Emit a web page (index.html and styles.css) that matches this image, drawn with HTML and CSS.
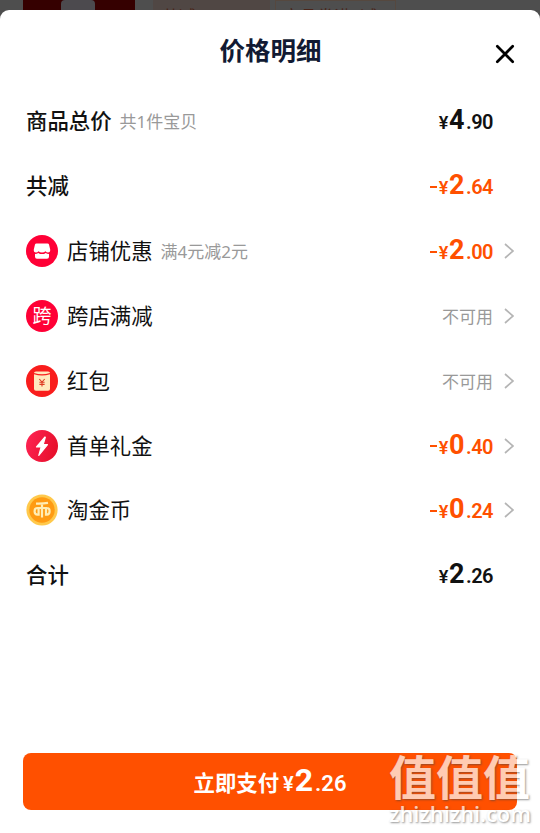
FILE: index.html
```html
<!DOCTYPE html>
<html lang="zh-CN">
<head>
    <meta charset="UTF-8">
    <meta name="viewport" content="width=device-width, initial-scale=1.0">
    <title>价格明细</title>
    <link rel="stylesheet" href="styles.css">
</head>
<body>
    <!-- Dimmed page behind the sheet -->
    <div class="backdrop">
        <div class="backdrop-image"><div class="backdrop-shape"></div></div>
        <div class="backdrop-tag">共减 ¥2.64</div>
        <div class="backdrop-tag outlined">商品券满4减2</div>
    </div>

    <div class="sheet">
        <div class="sheet-header">
            <h1>价格明细</h1>
            <svg class="close" viewBox="0 0 20 20"><path d="M2.3 2.3L17.7 17.7M17.7 2.3L2.3 17.7"/></svg>
        </div>

        <div class="price-list">
            <div class="row total">
                <span class="label">商品总价</span>
                <span class="note">共1件宝贝</span>
                <span class="price"><i>¥</i><b>4</b>.90</span>
            </div>
            <div class="row total">
                <span class="label">共减</span>
                <span class="price minus"><em></em><i>¥</i><b>2</b>.64</span>
            </div>
            <div class="row">
                <svg class="icon" viewBox="0 0 32 32">
                    <circle cx="16" cy="16" r="16" fill="#ff0036"/>
                    <path d="M10.5 8.5h11q1.2 0 1.5 1l1.2 5q.3 3-2.2 3-1.5 0-2.5-1.2-1.3 1.3-3.5 1.3t-3.5-1.3q-1 1.2-2.5 1.2-2.5 0-2.2-3l1.2-5q.3-1 1.5-1z" fill="#fff"/>
                    <path d="M9 19q2 0 3.3-1.1 1.5 1.2 3.7 1.2t3.7-1.2Q21 19 23 19v2.7q0 2-2 2H11q-2 0-2-2z" fill="#fff"/>
                </svg>
                <span class="label">店铺优惠</span>
                <span class="note">满4元减2元</span>
                <span class="price minus"><em></em><i>¥</i><b>2</b>.00</span>
                <svg class="arrow" viewBox="0 0 10 16"><path d="M1 1L9 8L1 15"/></svg>
            </div>
            <div class="row">
                <span class="icon icon-cross">跨</span>
                <span class="label">跨店满减</span>
                <span class="disabled">不可用</span>
                <svg class="arrow" viewBox="0 0 10 16"><path d="M1 1L9 8L1 15"/></svg>
            </div>
            <div class="row">
                <svg class="icon" viewBox="0 0 32 32">
                    <circle cx="16" cy="16" r="16" fill="#f91d1c"/>
                    <path d="M8 8Q8 6.5 10 6.5H22Q24 6.5 24 8Q16 10.4 8 8Z" fill="#ffe9bd"/>
                    <path d="M8 9.2Q16 11.8 24 9.2V24Q24 25.8 22 25.8H10Q8 25.8 8 24Z" fill="#ffe9bd"/>
                    <path d="M13.3 14L16 17L18.7 14M16 17V21.5M13.4 17.2H18.6M13.4 19.4H18.6" fill="none" stroke="#dd3b22" stroke-width="1.1"/>
                </svg>
                <span class="label">红包</span>
                <span class="disabled">不可用</span>
                <svg class="arrow" viewBox="0 0 10 16"><path d="M1 1L9 8L1 15"/></svg>
            </div>
            <div class="row">
                <svg class="icon" viewBox="0 0 32 32">
                    <defs>
                        <linearGradient id="gift" x1="0" y1="0" x2="1" y2="0.3">
                            <stop offset="0" stop-color="#ff2455"/>
                            <stop offset="1" stop-color="#e8112d"/>
                        </linearGradient>
                    </defs>
                    <circle cx="16" cy="16" r="16" fill="url(#gift)"/>
                    <path d="M19 7L10.5 17H15.2L12.8 25.5L21.5 14.6H17.2L19.3 7.4Z" fill="#fff" stroke="#fff" stroke-width="1.2" stroke-linejoin="round"/>
                </svg>
                <span class="label">首单礼金</span>
                <span class="price minus"><em></em><i>¥</i><b>0</b>.40</span>
                <svg class="arrow" viewBox="0 0 10 16"><path d="M1 1L9 8L1 15"/></svg>
            </div>
            <div class="row">
                <svg class="icon" viewBox="0 0 32 32">
                    <circle cx="16" cy="16" r="15.6" fill="#ffc94c"/>
                    <circle cx="16" cy="16" r="12.7" fill="#ff9b12"/>
                    <path d="M10 9.6Q17 9.8 22 8.9M16 9.8V23.5M13 14H11.5Q8.6 14 8.6 17.3T11.5 20.6H12.6V14H20V20.6H20.8Q23.6 20.6 23.6 17.3T20.8 14H20" fill="none" stroke="#ffedb5" stroke-width="2.2"/>
                </svg>
                <span class="label">淘金币</span>
                <span class="price minus"><em></em><i>¥</i><b>0</b>.24</span>
                <svg class="arrow" viewBox="0 0 10 16"><path d="M1 1L9 8L1 15"/></svg>
            </div>
            <div class="row total">
                <span class="label">合计</span>
                <span class="price"><i>¥</i><b>2</b>.26</span>
            </div>
        </div>

        <div class="pay-button">
            <span class="pay-text">立即支付</span>
            <span class="price"><i>¥</i><b>2</b>.26</span>
        </div>
    </div>

    <div class="watermark">
        <div class="watermark-name">值值值</div>
        <div class="watermark-url">zhizhizhi.com</div>
    </div>
</body>
</html>
```
FILE: styles.css
```css
* {
    box-sizing: border-box;
}

body {
    margin: 0;
    width: 540px;
    height: 833px;
    overflow: hidden;
    position: relative;
    display: flex;
    flex-direction: column;
    background: #4e4e4e;
    font-family: "Noto Sans CJK SC", sans-serif;
    color: #111;
}

/* Dimmed page */
.backdrop {
    height: 10px;
    flex: none;
    display: flex;
    align-items: flex-start;
    padding-left: 23px;
}

.backdrop-image {
    width: 112px;
    height: 17px;
    margin-right: 18px;
    background: #350000;
}

.backdrop-shape {
    width: 34px;
    height: 17px;
    margin-left: 38px;
    background: #4c4a4e;
    border-radius: 4px 4px 0 0;
}

.backdrop-tag {
    width: 117px;
    height: 30px;
    padding: 4px 9px 0;
    margin-right: 5px;
    background: #504744;
    color: #4a2418;
    font-size: 17px;
    line-height: 23px;
    white-space: nowrap;
}

.backdrop-tag.outlined {
    width: 121px;
    padding: 3px 7px 0;
    background: none;
    border: 1px solid #55483f;
}

/* Sheet */
.sheet {
    flex: 1;
    display: flex;
    flex-direction: column;
    background: #fff;
    border-radius: 9px 9px 0 0;
    z-index: 1;
}

.sheet-header {
    height: 79px;
    display: grid;
    grid-template-columns: 1fr auto 1fr;
    align-items: start;
    padding: 20px 25px 0 26px;
}

h1 {
    grid-column: 2;
    margin: 0;
    font-size: 25.5px;
    line-height: 38px;
    font-weight: 700;
    color: #111a33;
}

.close {
    width: 20px;
    height: 20px;
    margin-top: 14px;
    justify-self: end;
    fill: none;
    stroke: #000;
    stroke-width: 2.7;
    stroke-linecap: round;
}

.price-list {
    display: flex;
    flex-direction: column;
}

.row {
    height: 64.85px;
    display: flex;
    align-items: center;
    padding: 0 26px 0 26px;
}

.row.total {
    padding-right: 47px;
}

.icon {
    width: 32px;
    height: 32px;
    flex: none;
    margin-right: 9px;
}

.icon-cross {
    border-radius: 50%;
    background: #ff0036;
    color: #fff;
    font-size: 19px;
    line-height: 30px;
    text-align: center;
}

.label {
    padding-bottom: 2px;
    font-size: 21.4px;
    line-height: 32px;
    font-weight: 400;
}

.total .label {
    font-weight: 500;
}

.note,
.disabled {
    padding-bottom: 1px;
    font-size: 17px;
    font-weight: 400;
    color: #999;
}

.note {
    margin-left: 8px;
    font-family: "Noto Sans", "Noto Sans CJK SC", sans-serif;
}

.disabled {
    margin-left: auto;
}

.arrow {
    width: 10px;
    height: 16px;
    margin-left: 11px;
    fill: none;
    stroke: #b5b5b5;
    stroke-width: 1.7;
}

/* Prices */
.price {
    display: flex;
    align-items: baseline;
    margin-left: auto;
    padding-top: 1px;
    font-family: Roboto, sans-serif;
    font-size: 20px;
    line-height: 32px;
    font-weight: 600;
    letter-spacing: -0.5px;
}

.price i {
    font-style: normal;
    font-size: 18px;
    margin-right: 1px;
}

.price b {
    font-size: 27px;
    font-weight: 700;
    margin-right: 2px;
}

.price em {
    width: 7px;
    height: 2px;
    margin-right: 2px;
    align-self: center;
    background: #ff5000;
}

.price.minus {
    color: #ff5000;
}

/* Pay button */
.pay-button {
    height: 57px;
    margin: auto 23px 23px;
    display: flex;
    align-items: center;
    justify-content: center;
    background: #ff5000;
    border-radius: 8px;
    color: #fff;
}

.pay-text {
    font-size: 21.4px;
    font-weight: 700;
}

.pay-button .price {
    margin-left: 4px;
    font-size: 22px;
    letter-spacing: 0;
}

.pay-button .price i {
    font-size: 20px;
}

.pay-button .price b {
    font-size: 32px;
}

/* Watermark over the corner */
.watermark {
    position: absolute;
    z-index: 2;
    left: 389px;
    top: 748px;
    width: 146px;
    color: #fff;
    text-shadow: 1px 1px 2px rgba(70, 70, 70, 0.8);
    opacity: 0.7;
    white-space: nowrap;
}

.watermark-name {
    font-size: 47px;
    line-height: 54px;
    font-weight: 700;
}

.watermark-url {
    font-family: "Open Sans", sans-serif;
    font-size: 21.8px;
    line-height: 24px;
    font-weight: 600;
}
```
